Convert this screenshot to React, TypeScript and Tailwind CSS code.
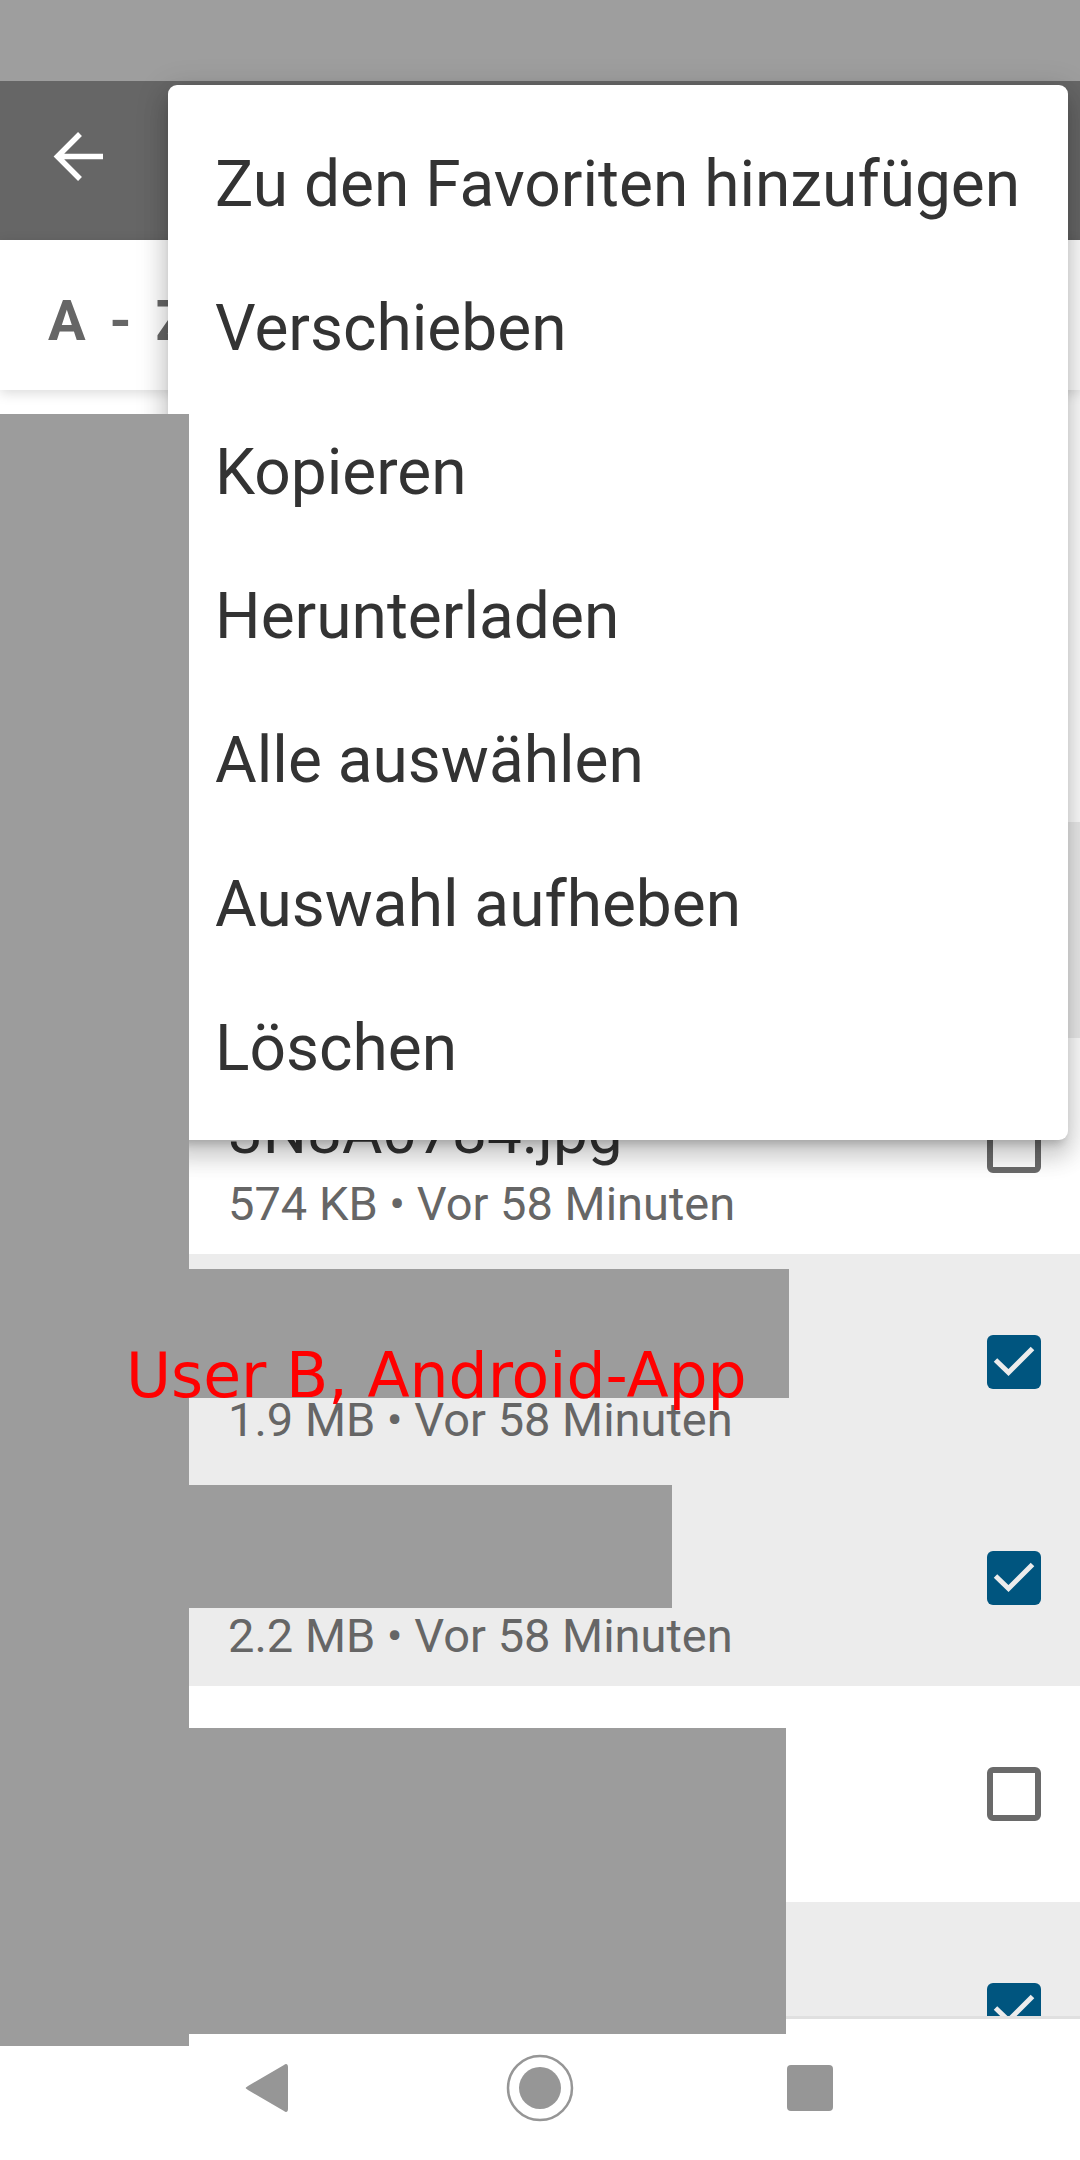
const menuItems = [
  'Zu den Favoriten hinzufügen',
  'Verschieben',
  'Kopieren',
  'Herunterladen',
  'Alle auswählen',
  'Auswahl aufheben',
  'Löschen',
]

const files = [
  { name: '', meta: '', selected: false },
  { name: '', meta: '', selected: false },
  { name: '', meta: '', selected: true },
  { name: '3N8A0784.jpg', meta: '574 KB • Vor 58 Minuten', selected: false },
  { name: '', meta: '1.9 MB • Vor 58 Minuten', selected: true },
  { name: '', meta: '2.2 MB • Vor 58 Minuten', selected: true },
  { name: '', meta: '', selected: false },
  { name: '', meta: '', selected: true },
]

function FileRow({ name, meta, selected }: { name: string; meta: string; selected: boolean }) {
  return (
    <div className={`flex h-[216px] shrink-0 items-center justify-between pl-[228px] pr-[39px] ${selected ? 'bg-[#ececec]' : 'bg-white'}`}>
      <div className="min-w-0 pt-[33px]">
        <div className="h-[81px] text-[62px] leading-[81px] text-[#333333]">{name}</div>
        <div className="h-[63px] text-[47px] leading-[63px] text-[#666666]">{meta}</div>
      </div>
      {selected ? (
        <div className="size-[54px] rounded-[6px] bg-[#00557f]">
          <svg width="54" height="54" viewBox="0 0 54 54" fill="none" stroke="#ececec" strokeWidth="5">
            <path d="M8.5 25 21.5 37.5 45.5 13.5" />
          </svg>
        </div>
      ) : (
        <div className="size-[54px] rounded-[6px] border-[6px] border-[#6a6a6a]" />
      )}
    </div>
  )
}

export default function App() {
  return (
    <div className="relative flex h-[2160px] w-[1080px] flex-col overflow-hidden bg-white font-['Roboto',sans-serif]">
      <div className="h-[81px] shrink-0 bg-[#9e9e9e]" />
      <div className="flex h-[159px] shrink-0 items-center bg-[#666666] pl-[49px]">
        <svg width="60" height="60" viewBox="0 0 60 60" fill="none" stroke="white" strokeWidth="5.5">
          <path d="M54 25.5H9M31 3 8.5 25.5 31 48" />
        </svg>
      </div>
      <div className="relative z-10 flex h-[150px] shrink-0 items-center bg-white pl-[48px] pt-[12px] text-[56px] font-bold tracking-[5px] text-[#666666] shadow-[0_3px_12px_rgba(0,0,0,0.15)]">
        A - Z
      </div>
      <div className="flex min-h-0 flex-1 flex-col overflow-hidden bg-white">
        {files.map((f, i) => (
          <FileRow key={i} {...f} />
        ))}
      </div>
      <div className="relative z-10 flex h-[144px] shrink-0 items-center justify-center border-t-[3px] border-[#e0e0e0] bg-white">
        <svg width="1080" height="141" viewBox="0 0 1080 141" fill="#969696">
          <path d="M284 46c2-2 4-1 4 2v42c0 3-2 4-4 2l-36-21c-3-2-3-2 0-4z" />
          <circle cx="540" cy="69" r="32" fill="none" stroke="#969696" strokeWidth="2.5" />
          <circle cx="540" cy="69" r="21" />
          <rect x="787" y="46" width="46" height="46" rx="4" />
        </svg>
      </div>

      <div className="absolute left-[168px] top-[85px] z-30 flex h-[1055px] w-[900px] flex-col rounded-[9px] bg-white pb-[24px] pl-[47px] pt-[28px] shadow-[0_16px_24px_2px_rgba(0,0,0,0.14),0_6px_30px_5px_rgba(0,0,0,0.12),0_8px_10px_-5px_rgba(0,0,0,0.2)]">
        {menuItems.map((item) => (
          <div key={item} className="flex h-[144px] shrink-0 items-center text-[64px] text-[#333333]">
            {item}
          </div>
        ))}
      </div>

      {/* redaction blocks sit over the menu too */}
      <div className="absolute left-0 top-[414px] z-40 h-[1632px] w-[189px] bg-[#9c9c9c]" />
      <div className="absolute left-[189px] top-[1269px] z-20 h-[129px] w-[600px] bg-[#9c9c9c]" />
      <div className="absolute left-[189px] top-[1485px] z-20 h-[123px] w-[483px] bg-[#9c9c9c]" />
      <div className="absolute left-[189px] top-[1728px] z-20 h-[306px] w-[597px] bg-[#9c9c9c]" />

      <div className="absolute left-[126px] top-[1339px] z-50 font-['DejaVu_Sans',sans-serif] text-[61.6px] leading-[75px] whitespace-nowrap text-[#ff0000]">
        User B, Android-App
      </div>
    </div>
  )
}
